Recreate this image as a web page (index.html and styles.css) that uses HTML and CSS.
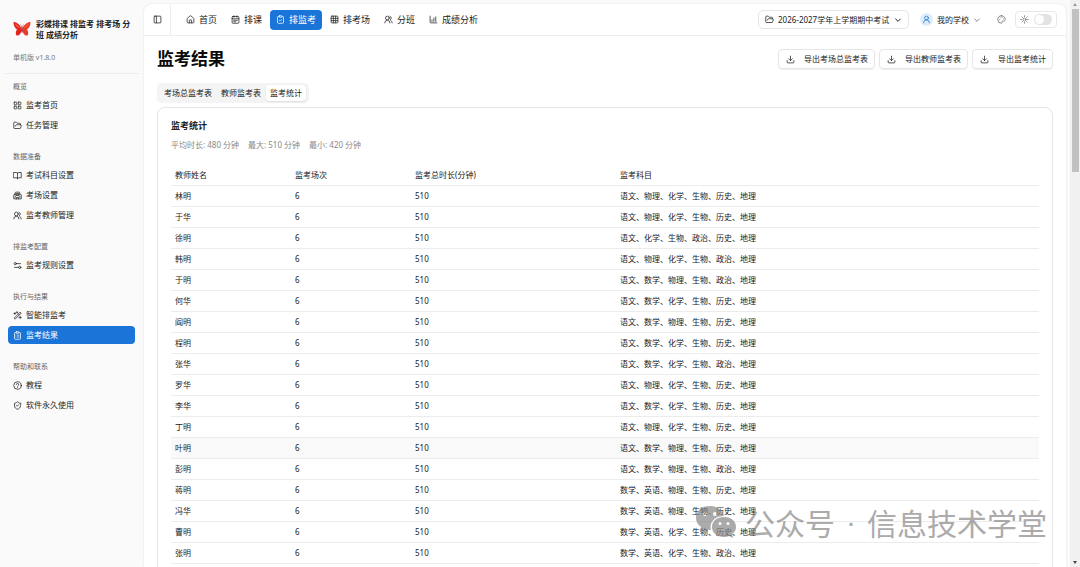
FILE: index.html
```html
<!DOCTYPE html>
<html lang="zh-CN">
  <head>
    <meta charset="UTF-8" />
    <meta name="viewport" content="width=device-width, initial-scale=1.0" />
    <title>监考结果</title>
    <link rel="stylesheet" href="styles.css">
  </head>
  <body>
    <svg class="sprite" aria-hidden="true">
      <symbol id="grid" viewBox="0 0 24 24"><rect x="3" y="3" width="7" height="7" rx="1" /><rect x="14" y="3" width="7" height="7" rx="1" /><rect x="14" y="14" width="7" height="7" rx="1" /><rect x="3" y="14" width="7" height="7" rx="1" /></symbol>
      <symbol id="folder" viewBox="0 0 24 24"><path d="m6 14 1.5-2.9A2 2 0 0 1 9.2 10H20a2 2 0 0 1 1.9 2.5l-1.5 6a2 2 0 0 1-2 1.5H4a2 2 0 0 1-2-2V5a2 2 0 0 1 2-2h3.9a2 2 0 0 1 1.7.9l.8 1.2a2 2 0 0 0 1.7.9H18a2 2 0 0 1 2 2v2" /></symbol>
      <symbol id="book" viewBox="0 0 24 24"><path d="M12 6v15M2 4h7a3 3 0 0 1 3 3 3 3 0 0 1 3-3h7v14h-7a3 3 0 0 0-3 3 3 3 0 0 0-3-3H2z" /></symbol>
      <symbol id="building" viewBox="0 0 24 24"><path d="M6 8V5a2 2 0 0 1 2-2h8a2 2 0 0 1 2 2v3M4 9h16a2 2 0 0 1 2 2v10H2V11a2 2 0 0 1 2-2zM9 21v-4h6v4M9 7h6M9 12h6M6 13v4M18 13v4" /></symbol>
      <symbol id="users" viewBox="0 0 24 24"><circle cx="9" cy="8" r="5" /><path d="M2 21a7 7 0 0 1 14 0M16 3.5a5 5 0 0 1 1 9M18 14.500a7 7 0 0 1 4 6.500" /></symbol>
      <symbol id="sliders" viewBox="0 0 24 24"><circle cx="6" cy="7" r="3" /><circle cx="18" cy="17" r="3" /><path d="M9 7h11M4 17h11" /></symbol>
      <symbol id="wand" viewBox="0 0 24 24"><path d="m21 5-2-2L3 19l2 2zM14 7l3 3M5 4v5M2.500 6.500h5M19 14v6M16 17h6M11 2v3M9.500 3.500h3" /></symbol>
      <symbol id="clipboard" viewBox="0 0 24 24"><rect x="8" y="2" width="8" height="4" rx="1" /><path d="M16 4h2a2 2 0 0 1 2 2v14a2 2 0 0 1-2 2H6a2 2 0 0 1-2-2V6a2 2 0 0 1 2-2h2M12 11h4M12 16h4M8 11h.01M8 16h.01" /></symbol>
      <symbol id="clipboard-check" viewBox="0 0 24 24"><rect x="8" y="2" width="8" height="4" rx="1" /><path d="M16 4h2a2 2 0 0 1 2 2v14a2 2 0 0 1-2 2H6a2 2 0 0 1-2-2V6a2 2 0 0 1 2-2h2M9 14l2 2 4-4" /></symbol>
      <symbol id="help" viewBox="0 0 24 24"><circle cx="12" cy="12" r="10" /><path d="M9 9a3 3 0 0 1 6 1c0 2-3 2-3 4M12 17.500h.01" /></symbol>
      <symbol id="shield" viewBox="0 0 24 24"><path d="M20 13c0 5-3.500 7.500-8 9-4.500-1.500-8-4-8-9V6c3 0 5.500-1.500 8-4 2.500 2.500 5 4 8 4zM9 12l2 2 4-4" /></symbol>
      <symbol id="panel" viewBox="0 0 24 24"><rect x="3" y="3" width="18" height="18" rx="2" /><path d="M9 3v18" /></symbol>
      <symbol id="home" viewBox="0 0 24 24"><path d="M15 21v-7a1 1 0 0 0-1-1h-4a1 1 0 0 0-1 1v7M3 10a2 2 0 0 1 .7-1.500l7-6a2 2 0 0 1 2.600 0l7 6A2 2 0 0 1 21 10v9a2 2 0 0 1-2 2H5a2 2 0 0 1-2-2z" /></symbol>
      <symbol id="calendar" viewBox="0 0 24 24"><rect x="3" y="4" width="18" height="18" rx="2" /><path d="M8 2v4M16 2v4M3 10h18M7 14h10M7 18h6" /></symbol>
      <symbol id="table" viewBox="0 0 24 24"><rect x="3" y="3" width="18" height="18" rx="2" /><path d="M3 9h18M3 15h18M9 3v18M15 3v18" /></symbol>
      <symbol id="chart" viewBox="0 0 24 24"><path d="M3 3v16a2 2 0 0 0 2 2h16M8 17v-4M13 17V8M18 17V5" /></symbol>
      <symbol id="chevron" viewBox="0 0 24 24"><path d="m5 9 7 7 7-7" /></symbol>
      <symbol id="user" viewBox="0 0 24 24"><circle cx="12" cy="8" r="5" /><path d="M4 21a8 8 0 0 1 16 0" /></symbol>
      <symbol id="palette" viewBox="0 0 24 24"><path d="M12 2a10 10 0 0 0 0 20c1.500 0 2-1 1.700-2.200-.7-2.300.3-3.800 2.300-3.800h2c2.500 0 4-2 4-4.500C22 6 17.500 2 12 2z" /><path d="M13.500 6.500h.01M17.500 10.500h.01M6.500 12.500h.01M8.500 7.500h.01" /></symbol>
      <symbol id="sun" viewBox="0 0 24 24"><circle cx="12" cy="12" r="4" /><path d="M12 2v2M12 20v2M5 5l1.400 1.400M17.600 17.600 19 19M2 12h2M20 12h2M6.400 17.600 5 19M19 5l-1.400 1.400" /></symbol>
      <symbol id="download" viewBox="0 0 24 24"><path d="M12 3v12M7 10l5 5 5-5M3 15v4a2 2 0 0 0 2 2h14a2 2 0 0 0 2-2v-4" /></symbol>
    </svg>

    <div class="app">
      <aside class="sidebar">
        <div class="brand">
          <svg class="logo" viewBox="0 0 36 36" aria-hidden="true">
            <path fill="#e3241f" d="M17 17C14 9 7 4 1 4c0 6 2 12 7 15-3 4-3 9-1 12 5 1 9-3 10-10z" />
            <path fill="#ee3a28" d="M19 17C22 9 29 4 35 4c0 6-2 12-7 15 3 4 3 9 1 12-5 1-9-3-10-10z" />
            <path fill="#f4553c" d="M15 17C12 12 8 9 4 7c1 5 5 9 11 10zM21 17c3-5 7-8 11-10-1 5-5 9-11 10z" />
            <path fill="#8f2020" d="M17 14h2l.5 8-1.500 5-1.500-5z" />
            <path fill="none" stroke="#a33" d="M18 15 15 9M18 15l3-6" />
          </svg>
          <strong>彩蝶排课 排监考 排考场 分班 成绩分析</strong>
        </div>
        <p class="version">单机版 v1.8.0</p>
        <nav class="menu">
          <section>
            <h2>概览</h2>
            <a href="#"><svg class="icon"><use href="#grid" /></svg>监考首页</a>
            <a href="#"><svg class="icon"><use href="#folder" /></svg>任务管理</a>
          </section>
          <section>
            <h2>数据准备</h2>
            <a href="#"><svg class="icon"><use href="#book" /></svg>考试科目设置</a>
            <a href="#"><svg class="icon"><use href="#building" /></svg>考场设置</a>
            <a href="#"><svg class="icon"><use href="#users" /></svg>监考教师管理</a>
          </section>
          <section>
            <h2>排监考配置</h2>
            <a href="#"><svg class="icon"><use href="#sliders" /></svg>监考规则设置</a>
          </section>
          <section>
            <h2>执行与结果</h2>
            <a href="#"><svg class="icon"><use href="#wand" /></svg>智能排监考</a>
            <a href="#" class="active"><svg class="icon"><use href="#clipboard" /></svg>监考结果</a>
          </section>
          <section>
            <h2>帮助和联系</h2>
            <a href="#"><svg class="icon"><use href="#help" /></svg>教程</a>
            <a href="#"><svg class="icon"><use href="#shield" /></svg>软件永久使用</a>
          </section>
        </nav>
      </aside>

      <div class="panel">
        <header class="topbar">
          <button class="toggle" aria-label="侧边栏"><svg class="icon"><use href="#panel" /></svg></button>
          <nav class="modules">
            <a href="#"><svg class="icon"><use href="#home" /></svg>首页</a>
            <a href="#"><svg class="icon"><use href="#calendar" /></svg>排课</a>
            <a href="#" class="active"><svg class="icon"><use href="#clipboard-check" /></svg>排监考</a>
            <a href="#"><svg class="icon"><use href="#table" /></svg>排考场</a>
            <a href="#"><svg class="icon"><use href="#users" /></svg>分班</a>
            <a href="#"><svg class="icon"><use href="#chart" /></svg>成绩分析</a>
          </nav>
          <label class="exam">
            <svg class="icon"><use href="#folder" /></svg>
            <select aria-label="考试">
              <option>2026-2027学年上学期期中考试</option>
            </select>
            <svg class="icon small"><use href="#chevron" /></svg>
          </label>
          <button class="account">
            <span class="avatar"><svg class="icon"><use href="#user" /></svg></span>
            我的学校
            <svg class="icon small muted"><use href="#chevron" /></svg>
          </button>
          <button class="theme" aria-label="主题"><svg class="icon"><use href="#palette" /></svg></button>
          <label class="mode">
            <svg class="icon"><use href="#sun" /></svg>
            <input type="checkbox" aria-label="深色模式" />
          </label>
        </header>

        <main>
          <div class="heading">
            <h1>监考结果</h1>
            <div class="actions">
              <button><svg class="icon"><use href="#download" /></svg>导出考场总监考表</button>
              <button><svg class="icon"><use href="#download" /></svg>导出教师监考表</button>
              <button><svg class="icon"><use href="#download" /></svg>导出监考统计</button>
            </div>
          </div>
          <div class="tabs" role="tablist">
            <button role="tab">考场总监考表</button>
            <button role="tab">教师监考表</button>
            <button role="tab" class="active" aria-selected="true">监考统计</button>
          </div>
          <section class="card">
            <h2>监考统计</h2>
            <p class="summary">
              <span>平均时长: 480 分钟</span>
              <span>最大: 510 分钟</span>
              <span>最小: 420 分钟</span>
            </p>
            <table>
              <thead>
                <tr>
                  <th class="name">教师姓名</th>
                  <th class="count">监考场次</th>
                  <th class="total">监考总时长(分钟)</th>
                  <th>监考科目</th>
                </tr>
              </thead>
              <tbody>
                <tr><td>林明</td><td>6</td><td>510</td><td>语文、物理、化学、生物、历史、地理</td></tr>
                <tr><td>于华</td><td>6</td><td>510</td><td>语文、物理、化学、生物、历史、地理</td></tr>
                <tr><td>徐明</td><td>6</td><td>510</td><td>语文、化学、生物、政治、历史、地理</td></tr>
                <tr><td>韩明</td><td>6</td><td>510</td><td>语文、物理、化学、生物、政治、地理</td></tr>
                <tr><td>于明</td><td>6</td><td>510</td><td>语文、数学、物理、生物、政治、地理</td></tr>
                <tr><td>何华</td><td>6</td><td>510</td><td>语文、数学、化学、生物、历史、地理</td></tr>
                <tr><td>阎明</td><td>6</td><td>510</td><td>语文、数学、物理、生物、历史、地理</td></tr>
                <tr><td>程明</td><td>6</td><td>510</td><td>语文、数学、化学、生物、历史、地理</td></tr>
                <tr><td>张华</td><td>6</td><td>510</td><td>语文、数学、化学、生物、政治、地理</td></tr>
                <tr><td>罗华</td><td>6</td><td>510</td><td>语文、物理、化学、生物、历史、地理</td></tr>
                <tr><td>李华</td><td>6</td><td>510</td><td>语文、数学、化学、生物、历史、地理</td></tr>
                <tr><td>丁明</td><td>6</td><td>510</td><td>语文、物理、化学、生物、历史、地理</td></tr>
                <tr class="hover"><td>叶明</td><td>6</td><td>510</td><td>语文、数学、物理、生物、历史、地理</td></tr>
                <tr><td>彭明</td><td>6</td><td>510</td><td>语文、数学、物理、生物、政治、地理</td></tr>
                <tr><td>蒋明</td><td>6</td><td>510</td><td>数学、英语、物理、生物、历史、地理</td></tr>
                <tr><td>冯华</td><td>6</td><td>510</td><td>数学、英语、物理、生物、历史、地理</td></tr>
                <tr><td>曹明</td><td>6</td><td>510</td><td>数学、英语、化学、生物、历史、地理</td></tr>
                <tr><td>张明</td><td>6</td><td>510</td><td>数学、英语、化学、生物、政治、地理</td></tr>
              </tbody>
            </table>
          </section>
        </main>
      </div>

      <div class="scrollbar" aria-hidden="true">
        <span class="arrow up"></span>
        <span class="thumb"></span>
        <span class="arrow down"></span>
      </div>
    </div>

    <div class="watermark">
      <svg viewBox="0 0 42 34" aria-hidden="true">
        <path fill="#888" fill-rule="evenodd" d="M15 1C7 1 1 6 1 13c0 4 2 7 5 9l-1 5 5-3q3 1 6 1C14 17 20 11 29 11 27 5 22 1 15 1zM10 7a2 2 0 1 1 0 4 2 2 0 0 1 0-4zM20 7a2 2 0 1 1 0 4 2 2 0 0 1 0-4z" />
        <path fill="#888" fill-rule="evenodd" d="M29 12c-7 0-12 4-12 10s5 10 12 10q3 0 5-1l4 2-1-4c3-2 4-4 4-7 0-6-5-10-12-10zM25 17a1.500 1.500 0 1 1 0 3 1.500 1.500 0 0 1 0-3zM33 17a1.500 1.500 0 1 1 0 3 1.500 1.500 0 0 1 0-3z" />
      </svg>
      <span>公众号</span>
      <span class="dot">·</span>
      <span>信息技术学堂</span>
    </div>
  </body>
</html>
```
FILE: styles.css
```css
* {
  box-sizing: border-box;
}

body {
  margin: 0;
  background-color: #fafafa;
  color: #222;
  font-family: "Noto Sans", "Noto Sans CJK SC", sans-serif;
  font-size: 8px;
  line-height: 14px;
}

h1,
h2,
p {
  margin: 0;
}

a {
  color: inherit;
  text-decoration: none;
}

button,
select {
  margin: 0;
  padding: 0;
  border: none;
  background: none;
  color: inherit;
  font: inherit;
  cursor: pointer;
}

.sprite {
  display: none;
}

.icon {
  flex: none;
  width: 9px;
  height: 9px;
  fill: none;
  stroke: currentColor;
  stroke-width: 2;
  stroke-linecap: round;
  stroke-linejoin: round;
}

.icon.small {
  width: 8px;
  height: 8px;
  stroke-width: 3;
}

.icon.muted {
  color: #888;
}

.app {
  display: flex;
  height: 100vh;
  overflow: hidden;
}

/* sidebar */
.sidebar {
  flex: none;
  width: 144px;
  padding: 18px 5px 0 4px;
}

.brand {
  display: flex;
  align-items: center;
  gap: 5px;
  padding: 0 4px 0 9px;
  line-height: 11px;
}

.logo {
  flex: none;
  width: 18px;
  height: 18px;
}

.version {
  padding: 11px 9px 8px;
  border-bottom: 1px solid #ececec;
  color: #777;
  font-size: 7px;
}

.menu {
  display: flex;
  flex-direction: column;
  gap: 16px;
  padding: 6px 4px 0;
}

.menu section {
  display: flex;
  flex-direction: column;
  gap: 2px;
}

.menu h2 {
  padding-left: 5px;
  color: #666;
  font-size: 7px;
  font-weight: normal;
}

.menu a {
  display: flex;
  align-items: center;
  gap: 4px;
  height: 18px;
  padding: 0 5px;
  border-radius: 4px;
}

.menu .active,
.modules .active {
  background-color: #1b74d8;
  color: #fff;
}

/* main panel */
.panel {
  flex: 1;
  min-width: 0;
  margin: 4px 4px 0 0;
  border-radius: 8px 8px 0 0;
  background-color: #fff;
  box-shadow: 0 0 2px #ddd;
}

.topbar {
  display: flex;
  align-items: center;
  height: 32px;
  padding-right: 9px;
  border-bottom: 1px solid #eee;
}

.toggle {
  display: flex;
  align-items: center;
  justify-content: center;
  align-self: stretch;
  width: 27px;
  border-right: 1px solid #eee;
}

.modules {
  display: flex;
  flex: 1;
  gap: 2px;
  padding-left: 9px;
  font-size: 9px;
}

.modules a {
  display: flex;
  align-items: center;
  gap: 4px;
  height: 20px;
  padding: 0 6px;
  border-radius: 4px;
  white-space: nowrap;
}

.exam {
  display: flex;
  align-items: center;
  gap: 4px;
  height: 19px;
  padding: 0 6px;
  border: 1px solid #e6e6e6;
  border-radius: 5px;
}

.exam select {
  appearance: none;
}

.account {
  display: flex;
  align-items: center;
  gap: 4px;
  margin-left: 11px;
}

.avatar {
  display: flex;
  align-items: center;
  justify-content: center;
  width: 13px;
  height: 13px;
  border-radius: 50%;
  background-color: #deecfb;
  color: #1b74d8;
}

.theme {
  display: flex;
  margin: 0 9px 0 16px;
  color: #666;
}

.mode {
  display: flex;
  align-items: center;
  gap: 5px;
  height: 17px;
  padding: 0 4px;
  border: 1px solid #e8e8e8;
  border-radius: 4px;
  color: #666;
}

.mode input {
  appearance: none;
  display: flex;
  width: 18px;
  height: 11px;
  margin: 0;
  padding: 1px;
  border-radius: 6px;
  background-color: #e3e3e3;
}

.mode input::before {
  content: "";
  width: 9px;
  height: 9px;
  border-radius: 50%;
  background-color: #fff;
}

main {
  padding: 13px;
}

.heading {
  display: flex;
  align-items: center;
  justify-content: space-between;
  height: 20px;
}

h1 {
  color: #0a0a0a;
  font-size: 17px;
  line-height: 20px;
}

.actions {
  display: flex;
  gap: 4px;
}

.actions button {
  display: flex;
  align-items: center;
  gap: 9px;
  height: 20px;
  padding: 0 6px 0 7px;
  border: 1px solid #e6e6e6;
  border-radius: 4px;
  box-shadow: 0 1px 1px #f0f0f0;
}

.tabs {
  display: flex;
  gap: 1px;
  width: fit-content;
  margin: 14px 0 4px;
  padding: 2px 3px;
  border-radius: 5px;
  background-color: #f4f4f4;
}

.tabs button {
  height: 16px;
  padding: 0 4px;
  border-radius: 4px;
}

.tabs .active {
  background-color: #fff;
  box-shadow: 0 1px 2px #ddd;
}

.card {
  min-height: 100vh;
  padding: 11px 13px;
  border: 1px solid #e6e6e6;
  border-radius: 8px;
}

.card h2 {
  font-size: 9px;
}

.summary {
  display: flex;
  gap: 9px;
  margin: 5px 0 12px;
  color: #888;
}

table {
  width: 100%;
  table-layout: fixed;
  border-spacing: 0;
}

th,
td {
  height: 21px;
  padding: 0 4px;
  border-bottom: 1px solid #ececec;
  font-weight: normal;
  text-align: left;
}

th {
  height: 22px;
}

.name,
.count {
  width: 120px;
}

.total {
  width: 205px;
}

tr:hover,
.hover {
  background-color: #f9f9f9;
}

/* page scrollbar */
.scrollbar {
  display: flex;
  flex: none;
  flex-direction: column;
  align-items: center;
  width: 10px;
  padding: 3px 0;
  background-color: #f1f1f1;
}

.thumb {
  width: 7px;
  height: 29%;
  margin: 3px 0 auto;
  background-color: #c1c1c1;
}

.arrow {
  border: 2px solid transparent;
}

.up {
  border-top: none;
  border-bottom: 3px solid #999;
}

.down {
  border-top: 3px solid #444;
  border-bottom: none;
}

.watermark {
  position: absolute;
  right: 33px;
  bottom: 26px;
  display: flex;
  align-items: center;
  gap: 8px;
  color: #888;
  font-family: "Noto Sans CJK SC", sans-serif;
  font-size: 30px;
  line-height: 38px;
  opacity: 0.7;
  pointer-events: none;
}

.watermark svg {
  width: 42px;
  height: 34px;
}

.dot {
  width: 16px;
  font-family: "Liberation Sans", sans-serif;
  text-align: center;
}
```
